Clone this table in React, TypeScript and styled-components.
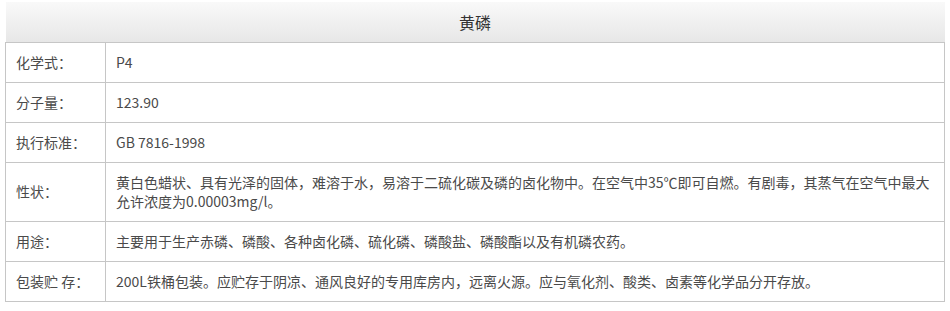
import React from "react";
import styled, { createGlobalStyle } from "styled-components";

interface Row {
  label: string;
  value: string;
}

const rows: Row[] = [
  { label: "化学式：", value: "P4" },
  { label: "分子量：", value: "123.90" },
  { label: "执行标准：", value: "GB 7816-1998" },
  {
    label: "性状：",
    value:
      "黄白色蜡状、具有光泽的固体，难溶于水，易溶于二硫化碳及磷的卤化物中。在空气中35℃即可自燃。有剧毒，其蒸气在空气中最大允许浓度为0.00003mg/l。",
  },
  {
    label: "用途：",
    value: "主要用于生产赤磷、磷酸、各种卤化磷、硫化磷、磷酸盐、磷酸酯以及有机磷农药。",
  },
  {
    label: "包装贮 存：",
    value:
      "200L铁桶包装。应贮存于阴凉、通风良好的专用库房内，远离火源。应与氧化剂、酸类、卤素等化学品分开存放。",
  },
];

const App: React.FC = () => {
  return (
    <>
      <GlobalStyle />
      <Page>
        <SpecTable>
          <colgroup>
            <LabelCol />
            <col />
          </colgroup>
          <thead>
            <tr>
              <TitleCell colSpan={2}>黄磷</TitleCell>
            </tr>
          </thead>
          <tbody>
            {rows.map((row, index) => (
              <tr key={index.toString()}>
                <LabelCell>{row.label}</LabelCell>
                <ValueCell>{row.value}</ValueCell>
              </tr>
            ))}
          </tbody>
        </SpecTable>
      </Page>
    </>
  );
};

const GlobalStyle = createGlobalStyle`
  html, body {
    margin: 0;
    padding: 0;
    background: #ffffff;
  }
  body {
    font-family: "Microsoft YaHei", "Noto Sans CJK SC", "Noto Sans", sans-serif;
    font-size: 14px;
    color: #4a4a4a;
  }
`;

const Page = styled.div`
  padding: 2px 5px 0;
  width: 940px;
`;

const SpecTable = styled.table`
  width: 940px;
  border-collapse: collapse;
  table-layout: fixed;
`;

const LabelCol = styled.col`
  width: 100px;
`;

const TitleCell = styled.th`
  height: 40px;
  padding: 0;
  border-bottom: 1px solid #c6c6c6;
  background: linear-gradient(to bottom, #f9f9f9 0%, #e7e7e7 100%);
  font-size: 16px;
  font-weight: 400;
  line-height: 20px;
  color: #333333;
  text-align: center;
  box-sizing: border-box;
`;

const LabelCell = styled.td`
  padding: 10px 10px;
  border: 1px solid #c6c6c6;
  border-top: none;
  line-height: 19px;
  vertical-align: middle;
  box-sizing: border-box;
`;

const ValueCell = styled.td`
  padding: 10px 6px 10px 10px;
  border: 1px solid #c6c6c6;
  border-top: none;
  line-height: 19px;
  vertical-align: middle;
  box-sizing: border-box;
`;

export default App;
